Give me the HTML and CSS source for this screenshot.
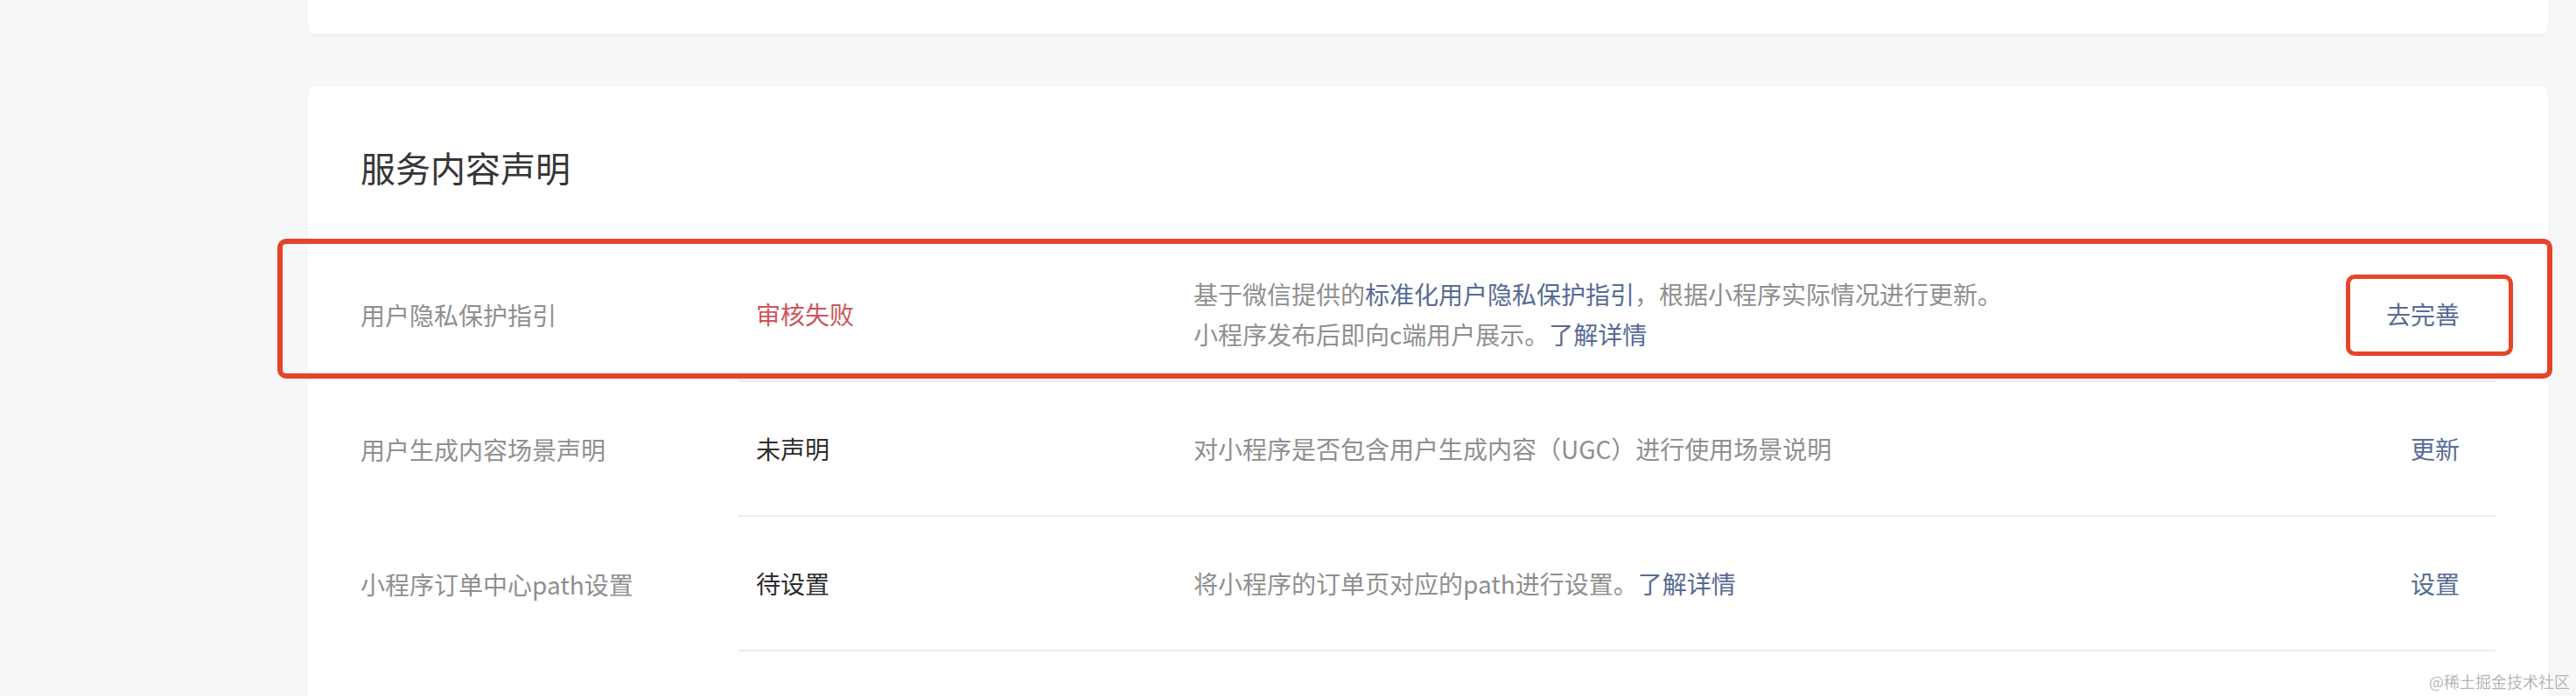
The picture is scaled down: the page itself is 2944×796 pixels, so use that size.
FILE: index.html
```html
<!DOCTYPE html>
<html lang="zh-CN">
<head>
<meta charset="utf-8">
<title>服务内容声明</title>
<link rel="stylesheet" href="styles.css">
</head>
<body>
<div class="page">
  <div class="card card-top"></div>
  <section class="card card-main">
    <h2 class="card-title">服务内容声明</h2>
    <div class="list">
      <div class="row">
        <div class="row-label">用户隐私保护指引</div>
        <div class="row-body">
          <div class="row-status status-fail">审核失败</div>
          <div class="row-desc">
            <p>基于微信提供的<a class="link" href="#">标准化用户隐私保护指引</a>，根据小程序实际情况进行更新。</p>
            <p>小程序发布后即向c端用户展示。<a class="link" href="#">了解详情</a></p>
          </div>
          <div class="row-action"><a class="link action-link" href="#">去完善<span class="mark mark-btn"></span></a></div>
        </div>
        <span class="mark mark-row"></span>
      </div>
      <div class="row">
        <div class="row-label">用户生成内容场景声明</div>
        <div class="row-body">
          <div class="row-status">未声明</div>
          <div class="row-desc">
            <p>对小程序是否包含用户生成内容（UGC）进行使用场景说明</p>
          </div>
          <div class="row-action"><a class="link action-link" href="#">更新</a></div>
        </div>
      </div>
      <div class="row">
        <div class="row-label">小程序订单中心path设置</div>
        <div class="row-body">
          <div class="row-status">待设置</div>
          <div class="row-desc">
            <p>将小程序的订单页对应的path进行设置。<a class="link" href="#">了解详情</a></p>
          </div>
          <div class="row-action"><a class="link action-link" href="#">设置</a></div>
        </div>
      </div>
    </div>
  </section>
</div>
<div class="watermark">@稀土掘金技术社区</div>
</body>
</html>
```

FILE: styles.css
```css
* {
  box-sizing: border-box;
}

html, body {
  margin: 0;
  padding: 0;
  height: 100%;
  overflow: hidden;
}

body {
  background: #f6f7f9;
  font-family: "Noto Sans CJK SC", "Noto Sans", sans-serif;
  color: #353535;
}

.page {
  padding: 0 32px 0 352px;
  display: flex;
  flex-direction: column;
  gap: 60px;
}

.card {
  background: #ffffff;
  border-radius: 8px;
  box-shadow: 0 1px 3px rgba(0, 0, 0, 0.05);
}

.card-top {
  height: 39px;
  border-top-left-radius: 0;
  border-top-right-radius: 0;
}

.card-main {
  padding: 64px 60px 0 60px;
  min-height: 720px;
}

.card-title {
  margin: 0 0 64px 0;
  font-size: 40px;
  line-height: 56px;
  font-weight: 400;
  color: #353535;
}

.list {
  display: flex;
  flex-direction: column;
}

.row {
  position: relative;
  display: flex;
  align-items: stretch;
}

.row-label {
  width: 432px;
  flex: none;
  display: flex;
  align-items: center;
  font-size: 28px;
  line-height: 40px;
  color: #8f8f8f;
}

.row-body {
  flex: 1;
  display: flex;
  align-items: center;
  min-height: 154px;
  padding: 30px 0;
  border-bottom: 2px solid #ebebeb;
}

.row-status {
  width: 520px;
  flex: none;
  padding: 0 20px;
  font-size: 28px;
  line-height: 40px;
  color: #2d2d2d;
}

.status-fail {
  color: #cf5459;
}

.row-desc {
  flex: 1;
  font-size: 28px;
  line-height: 46px;
  color: #8f8f8f;
}

.row-desc p {
  margin: 0;
}

.link {
  color: #576b95;
  text-decoration: none;
}

.row-action {
  flex: none;
  padding-right: 41px;
  font-size: 28px;
  line-height: 40px;
  text-align: right;
}

.action-link {
  position: relative;
  display: inline-block;
}

.mark {
  position: absolute;
  border: 6px solid #e5442b;
  border-radius: 10px;
  pointer-events: none;
}

.mark-row {
  left: -95px;
  top: -10px;
  width: 2600px;
  height: 160px;
}

.mark-btn {
  left: -46px;
  right: -61px;
  top: -25px;
  bottom: -28px;
  border-width: 5px;
}

.watermark {
  position: fixed;
  right: 7px;
  bottom: 6px;
  font-size: 18px;
  line-height: 22px;
  color: #b5b5b5;
  font-family: "Noto Sans CJK SC", sans-serif;
}
```
